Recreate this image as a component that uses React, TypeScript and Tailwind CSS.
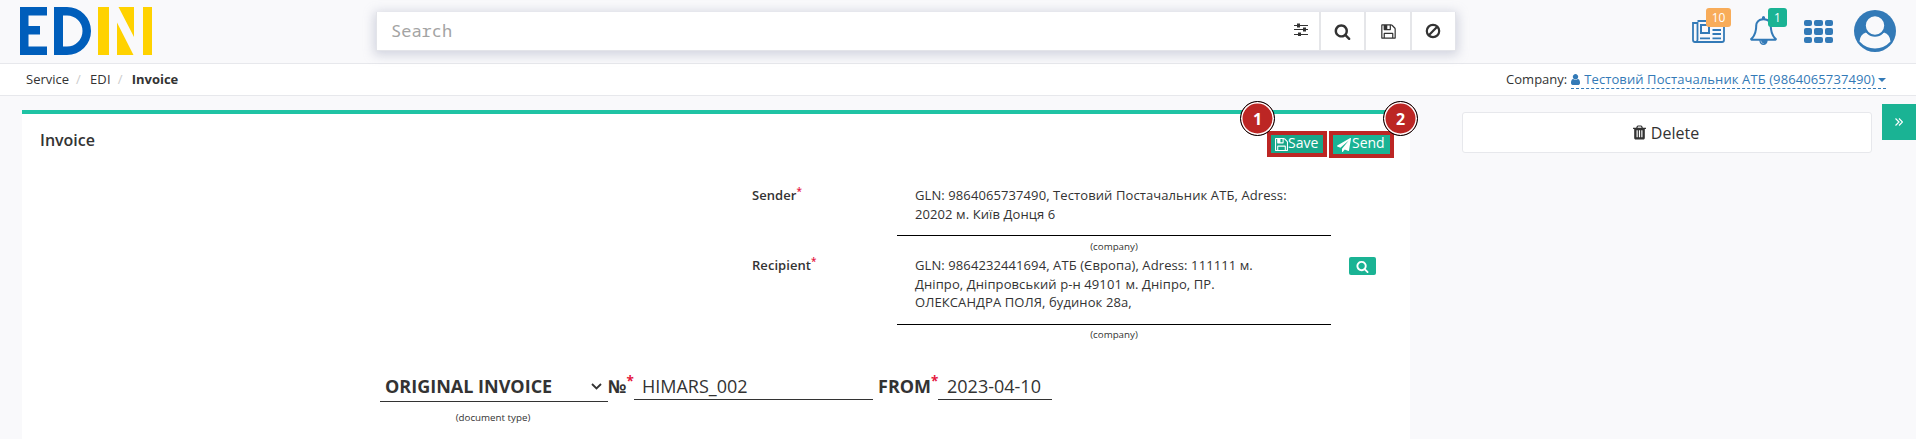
import type { ReactNode } from "react";

const PATHS = {
  floppy:
    "M512 1536h768v-384h-768v384zM1408 1536h128v-896q0-14-10-38.5t-20-34.5l-281-281q-10-10-34-20t-39-10v416q0 40-28 68t-68 28h-576q-40 0-68-28t-28-68v-416h-128v1280h128v-416q0-40 28-68t68-28h832q40 0 68 28t28 68v416zM1024 608v-320q0-13-9.5-22.5t-22.5-9.5h-192q-13 0-22.5 9.5t-9.5 22.5v320q0 13 9.5 22.5t22.5 9.5h192q13 0 22.5-9.5t9.5-22.5zM1664 640v928q0 40-28 68t-68 28h-1344q-40 0-68-28t-28-68v-1344q0-40 28-68t68-28h928q40 0 88 20t76 48l280 280q28 28 48 76t20 88z",
  search:
    "M1216 832q0-185-131.5-316.5t-316.5-131.5-316.5 131.5-131.5 316.5 131.5 316.5 316.5 131.5 316.5-131.5 131.5-316.5zm512 832q0 52-38 90t-90 38q-54 0-90-38l-343-342q-179 124-399 124-143 0-273.5-55.5t-225-150-150-225-55.5-273.5 55.5-273.5 150-225 225-150 273.5-55.5 273.5 55.5 225 150 150 225 55.5 273.5q0 220-124 399l343 343q37 37 37 90z",
  plane:
    "M1764 11q33 24 27 64l-256 1536q-5 29-32 45-14 8-31 8-11 0-24-5l-453-185-242 295q-18 23-49 23-13 0-22-4-19-7-30.5-23.5t-11.5-36.5v-349l864-1059-1069 925-395-162q-37-14-40-55-2-40 32-59l1664-960q15-9 32-9 20 0 36 11z",
  bell: "M912 1696q0-16-16-16-59 0-101.5-42.5t-42.5-101.5q0-16-16-16t-16 16q0 73 51.5 124.5t124.5 51.5q16 0 16-16zM246 1408h1300q-266-300-266-832 0-51-24-105t-69-103-121.5-80.5-169.5-31.5-169.5 31.5-121.5 80.5-69 103-24 105q0 532-266 832zm1482 0q0 52-38 90t-90 38h-448q0 106-75 181t-181 75-181-75-75-181h-448q-52 0-90-38t-38-90q50-42 91-88t85-119.5 74.5-158.5 50-206 19.5-260q0-152 117-282.5t307-158.5q-8-19-8-39 0-40 28-68t68-28 68 28 28 68q0 20-8 39 190 28 307 158.5t117 282.5q0 139 19.5 260t50 206 74.5 158.5 85 119.5 91 88z",
  trash:
    "M704 1376v-704q0-14-9-23t-23-9h-64q-14 0-23 9t-9 23v704q0 14 9 23t23 9h64q14 0 23-9t9-23zm256 0v-704q0-14-9-23t-23-9h-64q-14 0-23 9t-9 23v704q0 14 9 23t23 9h64q14 0 23-9t9-23zm256 0v-704q0-14-9-23t-23-9h-64q-14 0-23 9t-9 23v704q0 14 9 23t23 9h64q14 0 23-9t9-23zm-544-992h448l-48-117q-7-9-17-11h-317q-10 2-17 11zm928 32v64q0 14-9 23t-23 9h-96v948q0 83-47 143.5t-113 60.5h-832q-66 0-113-58.5t-47-141.5v-952h-96q-14 0-23-9t-9-23v-64q0-14 9-23t23-9h309l70-167q15-37 54-63t79-26h320q40 0 79 26t54 63l70 167h309q14 0 23 9t9 23z",
  user: "M1536 1399q0 109-62.5 187t-150.5 78h-854q-88 0-150.5-78t-62.5-187q0-85 8.5-160.5t31.5-152 58.5-131 94-89 134.5-34.5q131 128 313 128t313-128q76 0 134.5 34.5t94 89 58.5 131 31.5 152 8.5 160.5zm-256-887q0 159-112.5 271.5t-271.5 112.5-271.5-112.5-112.5-271.5 112.5-271.5 271.5-112.5 271.5 112.5 112.5 271.5z",
};

function Glyph({ name, className, box = "0 0 1792 1792" }: { name: keyof typeof PATHS; className: string; box?: string }) {
  return (
    <svg viewBox={box} fill="currentColor" className={className}>
      <path d={PATHS[name]} />
    </svg>
  );
}

function Logo() {
  return (
    <svg viewBox="0 0 132 48" className="h-12 w-[132px]">
      <path fill="#005ebb" d="M0 0h27v8.500H8.500V19H20v8.500H8.500V39.500H27V48H0z" />
      <path fill="#005ebb" fillRule="evenodd" d="M34 0h13a24 24 0 0 1 0 48H34zM43 8.500v31h4a15.500 15.500 0 0 0 0-31z" />
      <path fill="#ffd200" d="M78 0h11v48H78zM97 48V15.500L113.500 48zM98.500 0H114v30zM123 0h9v48h-9z" />
    </svg>
  );
}

function Header() {
  return (
    <header className="flex h-16 border-b border-[#e7e8ec] pl-5">
      <div className="w-[356px] pt-[7px]">
        <Logo />
      </div>
      <div className="mt-3 flex h-[39px] w-[1080px] border border-t-0 border-[#e3e4e9] bg-white shadow-[0_2px_10px_2px_rgba(150,155,180,0.4)]">
        <div className="flex-1 pl-3.5 pt-1.5 font-['Noto_Sans_Mono','DejaVu_Sans_Mono',monospace] text-[17px] leading-[26px] text-[#a3a3a3]">
          Search
        </div>
        <div className="w-[25px] pt-[11px]">
          <svg viewBox="0 0 14 13" className="h-[13px] w-3.5" fill="none" stroke="#333">
            <path d="M0 2.500h14M0 6.500h14M0 11.500h14" strokeWidth="1.100" />
            <path d="M4.500 .5v4M10.500 4.500v4M5.500 9.500v3.500" strokeWidth="3" />
          </svg>
        </div>
        <SearchButton>
          <Glyph name="search" className="size-[17px]" />
        </SearchButton>
        <SearchButton>
          <Glyph name="floppy" className="size-[17px]" />
        </SearchButton>
        <SearchButton>
          <svg viewBox="0 0 16 16" className="size-4" fill="none" stroke="currentColor" strokeWidth="2.200">
            <circle cx="8" cy="8" r="6.200" />
            <path d="M3.800 12.200l8.400-8.400" />
          </svg>
        </SearchButton>
      </div>
      <div className="flex text-[#337ab7]">
        <div className="relative ml-[236px] mt-5 h-[23px] w-[33px]">
          <svg viewBox="0 0 33 23" className="h-[23px] w-[33px]" fill="none" stroke="currentColor" strokeWidth="1.800">
            <path d="M5.500 1h26.500v19q0 2-2 2H3q-2 0-2-2V3h4.500v17q0 1.500-2 2" />
            <rect x="9" y="5" width="8" height="8" strokeWidth="2" />
            <path d="M20.500 10h8.500M20.500 14h8.500M8 18.300h10M20.500 18.300h8.500M20.500 6h8.500" strokeWidth="1.800" />
          </svg>
          <span className="absolute -top-3 left-3.5 flex h-[19px] w-[25px] items-center justify-center rounded-[3px] bg-[#f8ac59] text-xs text-white">
            10
          </span>
        </div>
        <div className="relative ml-[25px] mt-4 h-[29px] w-[27px]">
          <Glyph name="bell" box="64 0 1664 1792" className="h-[29px] w-[27px]" />
          <span className="absolute -top-2 left-[18px] flex h-[19px] w-[19px] items-center justify-center rounded-[3px] bg-[#1ab394] text-xs text-white">
            1
          </span>
        </div>
        <div className="ml-[27px] mt-5 grid h-[23px] w-[29px] grid-cols-3 grid-rows-3 gap-x-0.5 gap-y-[2px]">
          {Array.from({ length: 9 }, (_, i) => (
            <i key={i} className="rounded-[2px] bg-[#337ab7]" />
          ))}
        </div>
        <svg viewBox="0 0 42 42" className="ml-[21px] mt-2.5 size-[42px]">
          <circle cx="21" cy="21" r="21" fill="currentColor" />
          <path d="M12 22.500q9 6.500 18 0q6 2 6.500 9q-6.500 7-15.500 7t-15.500-7q.5-7 6.500-9z" fill="#f9f9fb" />
          <circle cx="21" cy="15.500" r="10.200" fill="#f9f9fb" stroke="currentColor" strokeWidth="2" />
        </svg>
      </div>
    </header>
  );
}

function SearchButton({ children }: { children: ReactNode }) {
  return (
    <div className="flex w-[45.300px] items-center justify-center border-l-2 border-[#e5e6e9] text-[#333]">
      {children}
    </div>
  );
}

function Breadcrumbs() {
  return (
    <nav className="flex h-8 items-center justify-between border-b border-[#e7e8ec] bg-white pl-[26px] pr-[30px] text-[13px]">
      <div className="flex">
        <span>Service</span>
        <span className="w-[21px] pl-[7px] text-[#ccc]">/</span>
        <span className="tracking-[0.1px]">EDI</span>
        <span className="w-[21px] pl-[7px] text-[#ccc]">/</span>
        <b>Invoice</b>
      </div>
      <div className="flex items-center">
        <span className="mr-1">Company:</span>
        <span className="flex h-[19px] items-center border-b border-dashed border-[#337ab7] pt-px tracking-[0.100px] text-[#337ab7]">
          <Glyph name="user" box="256 128 1280 1536" className="mr-1 h-[11px] w-[9px]" />
          Тестовий Постачальник АТБ (9864065737490)
          <svg viewBox="0 0 8 4" className="ml-[3px] h-1 w-2" fill="currentColor">
            <path d="M0 0h8L4 4z" />
          </svg>
        </span>
      </div>
    </nav>
  );
}

function StepBadge({ n, className }: { n: number; className: string }) {
  return (
    <span
      className={`absolute flex size-[35px] items-center justify-center rounded-full border border-black bg-[#bc2624] text-base font-bold text-white shadow-[inset_0_0_0_1.500px_#fff] ${className}`}
    >
      {n}
    </span>
  );
}

function Party({ label, lines, className, action }: { label: string; lines: string[]; className: string; action?: boolean }) {
  return (
    <div className={`flex text-[13px] leading-[18.570px] ${className}`}>
      <div className="w-[145px] font-semibold tracking-[0.060px]">
        {label}
        <span className="relative -top-[5.500px] text-[10px] leading-none text-[#e5173f]">*</span>
      </div>
      <div className="w-[434px]">
        <div className="border-b border-black pb-3 pl-[18px]">
          {lines.map((l) => (
            <p key={l} className="whitespace-nowrap tracking-[0.095px]">
              {l}
            </p>
          ))}
        </div>
        <p className="pt-[3.600px] text-center text-[9.750px] leading-[14px]">(company)</p>
      </div>
      {action && (
        <div className="ml-[18px] mt-px flex h-[18px] w-[27px] items-center justify-center rounded-[2px] bg-[#1ab394] text-white">
          <Glyph name="search" className="size-[13px]" />
        </div>
      )}
    </div>
  );
}

function TitleStar() {
  return <span className="relative -top-[7.500px] text-[13.500px] leading-none text-[#e5173f]">*</span>;
}

function InvoicePanel() {
  return (
    <main className="relative h-[329px] w-[1388px] border-t-4 border-[#1fc3a4] bg-white">
      <div className="flex h-[69px] justify-between pl-[18px] pr-4 pt-[17px]">
        <h1 className="text-base font-semibold leading-[19px]">Invoice</h1>
        <div className="flex items-start gap-0.5 text-sm text-white">
          <div className="flex h-[26px] w-[60px] items-center border-4 border-[#bc2624] bg-[#18a689] pl-1">
            <Glyph name="floppy" box="128 128 1536 1536" className="size-[13px]" />
            <span className="-mt-0.5 leading-4">Save</span>
          </div>
          <div className="flex h-[27px] w-[65px] items-center border-4 border-[#bc2624] bg-[#1ab394] pl-1">
            <Glyph name="plane" className="mr-px size-3.5" />
            <span className="-mt-[3px] leading-4">Send</span>
          </div>
        </div>
      </div>
      <StepBadge n={1} className="-top-[13px] left-[1218px]" />
      <StepBadge n={2} className="-top-[13px] left-[1361px]" />
      <Party
        className="h-[70px] pl-[730px] pt-[3px]"
        label="Sender"
        lines={["GLN: 9864065737490, Тестовий Постачальник АТБ, Adress:", "20202 м. Київ Донця 6"]}
      />
      <Party
        className="h-[116px] pl-[730px] pt-[3px]"
        label="Recipient"
        action
        lines={[
          "GLN: 9864232441694, АТБ (Європа), Adress: 111111 м.",
          "Дніпро, Дніпровський р-н 49101 м. Дніпро, ПР.",
          "ОЛЕКСАНДРА ПОЛЯ, будинок 28а,",
        ]}
      />
      <div className="flex items-start pl-[358px] text-lg leading-[25px]">
        <div className="w-[228px]">
          <div className="flex h-[33px] items-center border-b border-[#333] pl-[5px] pt-[3px] font-bold">
            ORIGINAL INVOICE
            <svg viewBox="0 0 11 7" className="ml-auto mr-1.5 h-[7px] w-[11px]" fill="none" stroke="#333" strokeWidth="1.800">
              <path d="M1 1l4.500 4.500L10 1" />
            </svg>
          </div>
          <p className="pr-0.5 pt-[9px] text-center text-[9.750px] leading-[14px]">(document type)</p>
        </div>
        <div className="w-[26px] whitespace-nowrap pt-[5px] font-bold">
          №<TitleStar />
        </div>
        <div className="h-[31px] w-[239px] border-b border-[#333] pl-2 pt-[5px]">HIMARS_002</div>
        <div className="w-[65px] whitespace-nowrap pl-[5px] pt-[5px] font-bold">
          FROM<TitleStar />
        </div>
        <div className="h-[31px] w-[114px] border-b border-[#333] pl-[9px] pt-[5px]">2023-04-10</div>
      </div>
    </main>
  );
}

export default function App() {
  return (
    <div className="h-[439px] w-[1916px] overflow-hidden bg-[#f9f9fb] font-['Open_Sans',sans-serif] text-[#333]">
      <Header />
      <Breadcrumbs />
      <div className="flex pl-[22px]">
        <div className="pt-3.5">
          <InvoicePanel />
        </div>
        <div className="ml-[52px] mt-4 flex h-[41px] w-[410px] items-center justify-center rounded-[3px] border border-[#e7e8ec] bg-white pr-0.5 text-base">
          <Glyph name="trash" box="192 128 1408 1536" className="mr-[5px] h-[15px] w-[13px]" />
          Delete
        </div>
        <div className="ml-2.5 mt-2 flex h-9 w-[34px] items-center justify-center bg-[#1ab394] text-white">
          <svg viewBox="0 0 8 8" className="size-2" fill="none" stroke="currentColor" strokeWidth="1.200">
            <path d="M.5.5L4 4 .5 7.500M4 .5L7.500 4 4 7.500" />
          </svg>
        </div>
      </div>
    </div>
  );
}
